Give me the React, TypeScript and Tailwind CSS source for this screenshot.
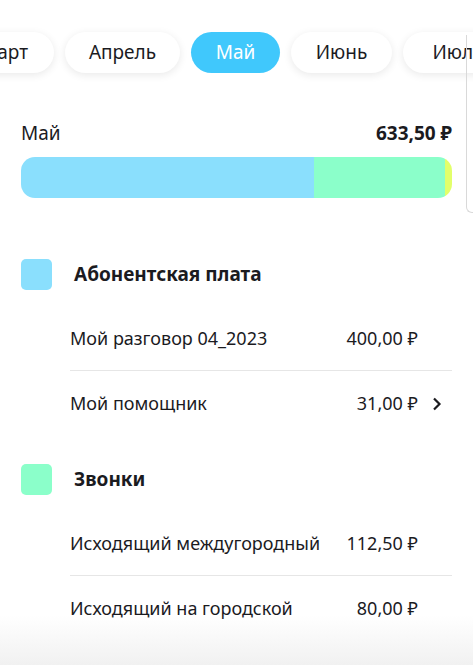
import React from "react";

const months = [
  { name: "Март", active: false, w: "w-[100px]" },
  { name: "Апрель", active: false, w: "w-[115px]" },
  { name: "Май", active: true, w: "w-[89px]" },
  { name: "Июнь", active: false, w: "w-[101px]" },
  { name: "Июль", active: false, w: "w-[110px]" },
];

function Row({ label, amount, chevron, divider }: { label: string; amount: string; chevron?: boolean; divider?: boolean }) {
  return (
    <div className={"relative ml-[70px] mr-[21px] h-[65px] flex items-center " + (divider ? "border-b border-[#e6e6e6]" : "")}>
      <span className="flex-1 text-[18px] text-[#1b1b1f]">{label}</span>
      <span className="text-[18px] text-[#1b1b1f] mr-[34px]">{amount}</span>
      {chevron && (
        <svg className="absolute right-[8px]" width="14" height="14" viewBox="0 0 14 14" fill="none">
          <path d="M4 1.5L9.5 7L4 12.5" stroke="#1b1b1f" strokeWidth="2.2" />
        </svg>
      )}
    </div>
  );
}

export default function App() {
  return (
    <div className="relative w-[473px] h-[665px] bg-white overflow-hidden" style={{ fontFamily: '"Noto Sans", "Open Sans", sans-serif' }}>
      <div className="absolute right-0 top-[35px] w-[7px] h-[178px] border-l border-b border-[#d9d9d9] rounded-bl-[6px]" />
      <div className="flex gap-[11px] pt-[32px] -ml-[46px] w-[700px]">
        {months.map((m) => (
          <div
            key={m.name}
            className={
              "h-[41px] rounded-full flex items-center justify-center text-[19px] shrink-0 " +
              m.w +
              " " +
              (m.active ? "bg-[#40c8fc] text-white" : "bg-white text-[#1b1b1f] shadow-[0_2px_8px_rgba(0,0,0,0.09)]")
            }
          >
            {m.name}
          </div>
        ))}
      </div>

      <div className="px-[21px] pt-[51px]">
        <div className="flex items-end justify-between">
          <span className="text-[19px] text-[#1b1b1f] leading-none">Май</span>
          <span className="text-[19px] font-bold text-[#1b1b1f] leading-none">633,50 ₽</span>
        </div>
        <div className="mt-[14px] h-[41px] w-[431px] rounded-[14px] overflow-hidden flex">
          <div className="w-[293px] bg-[#8adffd]" />
          <div className="w-[131px] bg-[#8bffca]" />
          <div className="flex-1 bg-[#e2ff6a]" />
        </div>
      </div>

      <div className="mt-[61px] px-[21px] flex items-center">
        <div className="w-[31px] h-[31px] rounded-[5px] bg-[#8adffd]" />
        <span className="ml-[22px] text-[19px] font-bold text-[#1b1b1f]">Абонентская плата</span>
      </div>
      <div className="mt-[16px]">
        <Row label="Мой разговор 04_2023" amount="400,00 ₽" divider />
        <Row label="Мой помощник" amount="31,00 ₽" chevron />
      </div>

      <div className="mt-[28px] px-[21px] flex items-center">
        <div className="w-[31px] h-[31px] rounded-[5px] bg-[#8bffca]" />
        <span className="ml-[22px] text-[19px] font-bold text-[#1b1b1f]">Звонки</span>
      </div>
      <div className="mt-[16px]">
        <Row label="Исходящий междугородный" amount="112,50 ₽" divider />
        <Row label="Исходящий на городской" amount="80,00 ₽" />
      </div>

      <div className="absolute left-0 right-0 bottom-0 h-[50px] bg-gradient-to-b from-transparent to-[#f1f1f1] pointer-events-none" />
    </div>
  );
}
